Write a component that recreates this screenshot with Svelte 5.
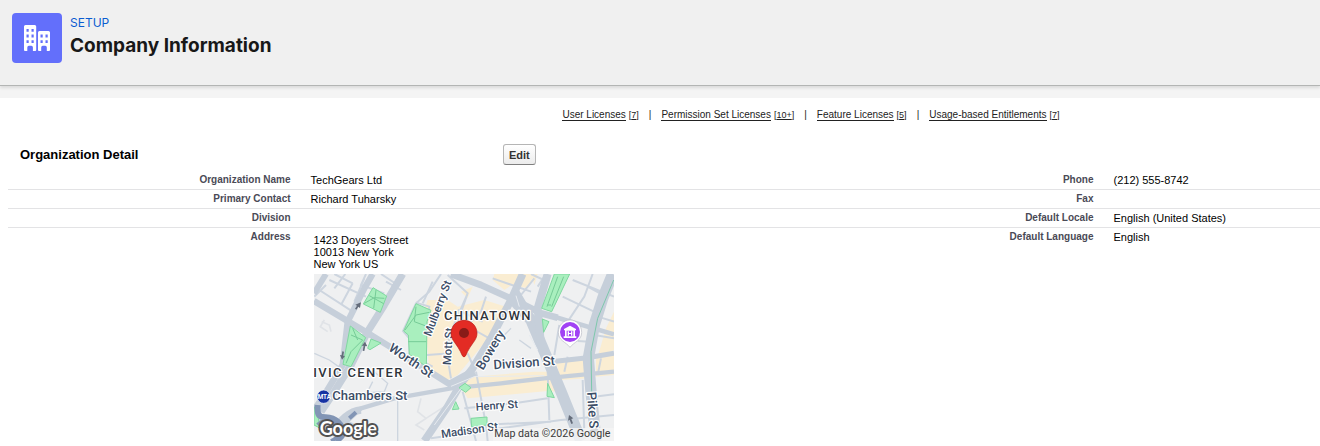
<script>
  const links = [
    { label: 'User Licenses', count: '7' },
    { label: 'Permission Set Licenses', count: '10+' },
    { label: 'Feature Licenses', count: '5' },
    { label: 'Usage-based Entitlements', count: '7' },
  ];

  const rows = [
    ['Organization Name', 'TechGears Ltd', 'Phone', '(212) 555-8742'],
    ['Primary Contact', 'Richard Tuharsky', 'Fax', ''],
    ['Division', '', 'Default Locale', 'English (United States)'],
  ];

  const address = ['1423 Doyers Street', '10013 New York', 'New York US'];
</script>

<header class="page-header">
  <svg class="setup-icon" viewBox="0 0 50 50" aria-hidden="true">
    <rect width="50" height="50" rx="4" fill="#636ffb" />
    <path
      fill="#fff"
      fill-rule="evenodd"
      d="M13.5 12h9.2q1.500 0 1.500 1.500V37q0 1-1 1h-2.300v-3.600q0-1.700-1.500-1.700h-2.600q-1.500 0-1.500 1.700V38H13q-1 0-1-1V13.500q0-1.500 1.500-1.500zM14.500 16v2.800h2.200V16zm5 0v2.800h2.200V16zm-5 5.600v2.800h2.200v-2.800zm5 0v2.800h2.200v-2.800zm-5 5.600V30h2.200v-2.800zm5 0V30h2.200v-2.800z"
    />
    <path
      fill="#fff"
      fill-rule="evenodd"
      d="M27.500 18h9q1.500 0 1.500 1.500V37q0 1-1 1h-2.200v-3.600q0-1.700-1.500-1.700h-2.600q-1.500 0-1.500 1.700V38H27q-1 0-1-1V19.500q0-1.500 1.500-1.500zM28.500 21.600v2.800h2.200v-2.800zm5 0v2.800h2.200v-2.800zm-5 5.600V30h2.200v-2.800zm5 0V30h2.200v-2.800z"
    />
  </svg>
  <div>
    <div class="eyebrow">SETUP</div>
    <h1>Company Information</h1>
  </div>
</header>

<main>
  <nav aria-label="Related lists">
    {#each links as link, i}
      {#if i > 0}<span class="divider">|</span>{/if}
      <a href="#related-{i}"><span class="name">{link.label}</span><span class="count">[<u>{link.count}</u>]</span></a>
    {/each}
  </nav>

  <div class="section-head">
    <h2>Organization Detail</h2>
    <button type="button">Edit</button>
  </div>

  <table>
    <colgroup>
      <col class="label-a" /><col class="value-a" /><col class="label-b" /><col />
    </colgroup>
    <tbody>
      {#each rows as [labelA, valueA, labelB, valueB]}
        <tr>
          <th scope="row">{labelA}</th>
          <td>{valueA}</td>
          <th scope="row">{labelB}</th>
          <td>{valueB}</td>
        </tr>
      {/each}
      <tr>
        <th scope="row">Address</th>
        <td>
          <div class="address">
            {#each address as line}<div>{line}</div>{/each}
            <svg class="map" viewBox="39 147 900 501" role="img" aria-label="Map of Chinatown, New York">
              <rect x="39" y="147" width="900" height="501" fill="#eff0f1" />

              <g fill="#faedd2">
                <path d="M380 225L440 225 470 245 550 225 615 245 590 300 570 330 470 450 440 465 385 440 378 350 365 270z" />
                <path d="M580 147H700L680 190 632 180 610 195 575 165z" />
                <path d="M515 455L700 440 765 440 770 500 740 498 500 520 475 480z" />
                <path d="M765 410L860 395V460L780 465zM885 400L939 390V450L885 455zM915 310L939 260V375L890 395z" />
                <path d="M480 200L515 185 500 220zM690 147L710 147 700 180z" />
              </g>

              <g fill="none" stroke="#cdd5df" stroke-width="6">
                <path d="M85 165L195 215M40 215L75 180 M55 195L155 260M133 147L100 190 M155 175L120 240M155 175L100 147" />
                <path d="M195 147L180 180 250 205M190 160L160 230M240 147L290 180M255 170L300 195" />
                <path d="M420 147L385 200 345 235 306 318 325 340 325 388 395 425M345 233L385 245 375 300V400" />
                <path d="M395 170L365 235M440 150L500 205 470 290M500 205L450 320M555 215L540 260 500 300 M470 255L545 290" />
                <path d="M378 390L450 385M500 385L515 420M445 320L440 400 450 460M520 315L565 340M525 440L555 600 560 648" />
                <path d="M485 500L525 648M390 640L560 615 780 585 939 570M490 550L640 535 740 520M880 515L939 508M540 600L750 590" />
                <path d="M575 160L690 200M700 160L660 210M690 147L735 168M735 147L710 185" />
                <path d="M815 165L939 215M785 215L890 265M875 147L850 215 800 290M860 185L915 215M890 275L939 290" />
                <path d="M775 300L760 390M880 330L939 340M865 350L830 348M740 440L745 585M800 395L790 440M900 400L890 450M845 465L850 620" />
                <path d="M610 330L630 310M655 345L690 370M40 385L85 405 120 430" stroke-width="4" />
                <path d="M220 440L260 475 250 500 170 505M290 505V648M215 470L200 500M80 600L130 585 210 620" stroke-width="4" />
                <path d="M360 520L350 560 375 580 345 600 370 615M375 580L430 545M62 290L85 300 90 320M70 285L58 305 80 320" stroke="#e0e3e7" stroke-width="5" />
              </g>

              <g fill="none" stroke="#c6cfda" stroke-linejoin="round">
                <path d="M39 228L190 318 275 370 450 480" stroke-width="19" />
                <path d="M450 147L540 180 640 225 720 265 770 278" stroke-width="20" />
                <path d="M765 277L810 290 939 328" stroke-width="14" />
                <path d="M305 147L250 240 200 320 150 420 100 500 60 560" stroke-width="22" />
                <path d="M215 147L190 190 140 290 125 420 70 510 39 555" stroke-width="19" />
                <path d="M75 147L39 205" stroke-width="18" />
                <path d="M665 147L630 225 570 340 515 430 480 475 440 545 370 648" stroke-width="23" />
                <path d="M630 215L690 285 730 380 780 500 840 648" stroke-width="34" />
                <path d="M645 195L700 290 730 370" stroke-width="16" />
                <path d="M740 147L710 250 720 360" stroke-width="24" />
                <path d="M935 147L905 220 880 300 862 400 870 500 885 648" stroke-width="34" />
                <path d="M120 605L180 550 280 520 450 490 600 475 730 460 939 440" stroke-width="13" />
                <path d="M750 410L860 398 939 385" stroke-width="15" />
                <path d="M445 480L520 440" stroke-width="26" />
                <path d="M45 545Q60 570 40 600M90 630Q130 560 180 555" stroke-width="22" />
              </g>

              <g fill="#a9efbe" stroke="#80d8a0" stroke-width="3">
                <path d="M216 188L257 213 238 262 187 237z" />
                <path d="M345 236L390 256 378 290 376 425L325 388 322 330 308 318z" />
                <path d="M148 303L194 338 150 425 126 418z" />
                <path d="M210 342L240 354 207 374 200 370z" />
                <path d="M760 147H806L752 260 722 250z" />
                <path d="M724 282L744 290 728 322z" />
                <path d="M474 488L492 475 510 488 494 502z" />
                <path d="M740 475L760 518 738 514z" />
                <path d="M464 530L474 552 454 554z" />
                <path d="M510 580L558 576V600L512 606z" />
                <path d="M39 545L48 562 58 610 39 600z" />
              </g>
              <g fill="none" stroke="#76cb97" stroke-width="3">
                <path d="M205 212L248 236M225 195L218 250M190 235L220 218 250 220" />
                <path d="M312 315L345 270 385 262M345 245L340 290 380 305M322 350H376" />
                <path d="M150 330L185 345 150 380 135 415M155 310L170 345" />
                <path d="M770 155L738 245M788 155L752 245M738 240H750" />
              </g>

              <g fill="none" stroke="#8295b5">
                <path d="M50 540C45 600 80 560 110 590S125 635 105 648" stroke-width="18" />
                <path d="M50 600Q80 570 105 600T90 648M145 580L165 562" stroke-width="12" />
              </g>
              <g fill="none" stroke="#e7ebf0" stroke-width="3">
                <path d="M645 212L655 245M685 330L710 375M480 490L400 600M450 484L520 455 730 452" />
              </g>
              <path d="M938 165L890 280 870 380 872 500" fill="none" stroke="#7dc8ac" stroke-width="3" />

              <g fill="#646c7a">
                <path d="M180 232L177 249 172 245 166 254 162 251 168 242 163 239z" />
                <path d="M192 350L199 364 193 363 190 378 185 377 188 362 182 362z" />
                <path d="M123 404L117 390 122 391 124 379 129 380 127 392 132 393z" />
                <path d="M804 570L817 580 811 582 816 595 811 597 806 584 801 587z" />
              </g>

              <g class="street">
                <text transform="translate(389 336) rotate(-69)" font-size="34">Mulberry St</text>
                <text transform="translate(449 421) rotate(-86)" font-size="34">Mott St</text>
                <text transform="translate(260 375) rotate(34)" font-size="39">Worth St</text>
                <text transform="translate(546 437) rotate(-59)" font-size="39">Bowery</text>
                <text transform="translate(578 433) rotate(-4)" font-size="39">Division St</text>
                <text transform="translate(525 557) rotate(-4)" font-size="33">Henry St</text>
                <text transform="translate(422 639) rotate(-8)" font-size="34">Madison St</text>
                <text transform="translate(858 502) rotate(86)" font-size="39">Pike St</text>
                <text x="94" y="526" font-size="39" fill="#40597b">Chambers St</text>
              </g>
              <g class="area">
                <text x="429" y="286">CHINATOWN</text>
                <text x="37" y="457">IVIC CENTER</text>
              </g>

              <circle cx="68" cy="515" r="20" fill="#1632a3" stroke="#fff" stroke-width="2" />
              <text x="50" y="523" class="mta">MTA</text>

              <path d="M807 285C826 285 842 301 842 322C842 347 820 350 807 367C794 350 772 347 772 322C772 301 788 285 807 285z" fill="#fff" stroke="#b9bbc4" stroke-width="2" />
              <circle cx="807" cy="321" r="30" fill="#a142f4" />
              <path d="M807 302L825 312V316H822V334H826V339H788V334H792V316H789V312zM797 317V334H817V317zM800 319H804V324H810V319H814V332H810V327H804V332H800z" fill="#fff" />

              <path d="M489 286C511 286 528 303 528 325C528 347 510 354 494 392Q489 400 484 392C468 354 450 347 450 325C450 303 467 286 489 286z" fill="#e32b24" stroke="#b71714" stroke-width="2" />
              <circle cx="489" cy="324" r="15" fill="#891b18" />

              <rect x="576" y="609" width="363" height="39" fill="#f5f5f5" fill-opacity="0.8" />
              <text x="580" y="636" class="credit">Map data ©2026 Google</text>
              <text x="56" y="629" class="brand">Google</text>
            </svg>
          </div>
        </td>
        <th scope="row">Default Language</th>
        <td>English</td>
      </tr>
    </tbody>
  </table>
</main>

<style>
  :global(body) {
    margin: 0;
    background: #fff;
    font-family: 'Liberation Sans', Arial, sans-serif;
    color: #000;
  }

  .page-header {
    position: relative;
    display: flex;
    align-items: flex-start;
    gap: 8px;
    padding: 13px 12px 22px;
    background: #f0f0f0;
    border-bottom: 1px solid #b3b5b4;
    box-shadow: 0 2px 3px rgba(0, 0, 0, 0.1);
    font-family: Inter, sans-serif;
  }

  .setup-icon {
    width: 50px;
    height: 50px;
    flex: none;
  }

  .eyebrow {
    font-size: 12px;
    line-height: 20px;
    color: #0b5cd0;
  }

  h1 {
    margin: 0;
    font-size: 19px;
    line-height: 26px;
    font-weight: 700;
    color: #181818;
  }

  main {
    border-top: 12px solid #f4f4f4;
    padding-left: 8px;
    overflow: hidden;
  }

  nav {
    display: flex;
    justify-content: center;
    align-items: baseline;
    gap: 10px;
    padding: 10px 0 0 294px;
    font-size: 10px;
    line-height: 14px;
    white-space: nowrap;
    color: #222;
  }

  nav a {
    display: flex;
    align-items: baseline;
    gap: 3px;
    color: #222;
    text-decoration: none;
  }

  .name {
    border-bottom: 1px solid #222;
    line-height: 10px;
  }

  .count {
    font-size: 9px;
  }

  .section-head {
    display: grid;
    grid-template-columns: 483px auto;
    justify-content: start;
    align-items: center;
    padding: 22px 0 6px 12px;
  }

  h2 {
    margin: 0;
    font-size: 13px;
    line-height: 20px;
  }

  button {
    height: 21px;
    padding: 0 5px;
    border: 1px solid #b5b5b5;
    border-bottom-color: #7f7f7f;
    border-radius: 3px;
    background: linear-gradient(#fff, #ececec);
    font: bold 11px 'Liberation Sans', Arial, sans-serif;
    color: #333;
  }

  table {
    width: 100%;
    table-layout: fixed;
    border-collapse: collapse;
  }

  .label-a {
    width: 22.3%;
  }

  .value-a {
    width: 43.2%;
  }

  .label-b {
    width: 18%;
  }

  th,
  td {
    padding: 2px 10px;
    vertical-align: top;
    border-bottom: 1px solid #e3e3e5;
    line-height: 14px;
    height: 14px;
  }

  th {
    text-align: right;
    font-size: 10px;
    color: #4a4a56;
  }

  td {
    font-size: 11px;
  }

  tr:last-child > * {
    border-bottom: 0;
  }

  .address {
    padding: 4px 3px 0;
    line-height: 12px;
  }

  .map {
    display: block;
    width: 300px;
    height: 167px;
    margin-top: 4px;
  }

  .map text {
    font-family: Roboto, sans-serif;
  }

  .street text {
    font-weight: 500;
    fill: #3c4d66;
    stroke: #fff;
    stroke-width: 7px;
    stroke-linejoin: round;
    paint-order: stroke;
  }

  .area text {
    font-size: 39px;
    font-weight: 500;
    letter-spacing: 4px;
    fill: #30343b;
    stroke: #fff;
    stroke-width: 7px;
    stroke-linejoin: round;
    paint-order: stroke;
  }

  .map .mta {
    font-size: 19px;
    font-weight: 700;
    fill: #fff;
  }

  .map .credit {
    font-size: 32px;
    fill: #3b3b3b;
  }

  .map .brand {
    font-family: Lato, sans-serif;
    font-size: 54px;
    font-weight: 700;
    fill: #fff;
    stroke: #525252;
    stroke-width: 12px;
    stroke-linejoin: round;
    paint-order: stroke;
  }
</style>
